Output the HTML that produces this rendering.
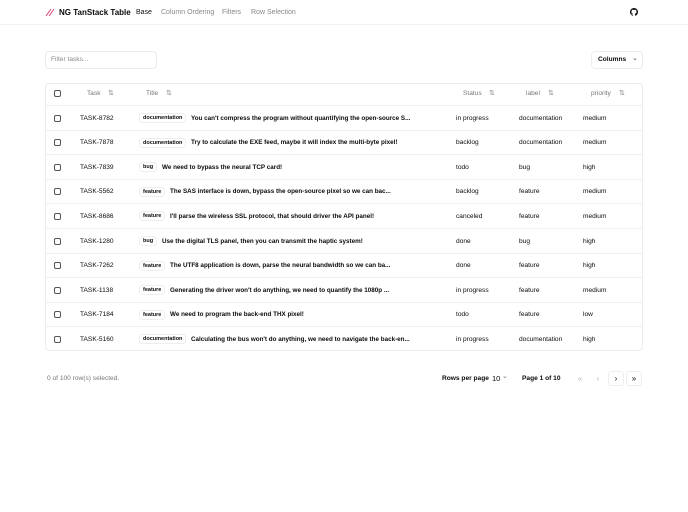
<!DOCTYPE html>
<html><head><meta charset="utf-8"><style>
*{box-sizing:border-box;margin:0;padding:0}
body{width:688px;height:512px;background:#fff;font-family:"Liberation Sans",sans-serif;color:#0a0a0a;position:relative;overflow:hidden;font-size:6.6px}
.a{position:absolute;white-space:nowrap}
.hdr{position:absolute;left:0;top:0;width:688px;height:25px;border-bottom:1px solid #f0f0f0}
.nav{color:#888;font-size:7px}
.box{position:absolute;border:1px solid #ececec;border-radius:4px;background:#fff}
.cb{position:absolute;width:7px;height:7px;border:1px solid #555;border-radius:2px;left:54px}
.row{position:absolute;left:46px;width:596px;height:24.6px;border-top:1px solid #f0f0f0}
.row span{position:absolute;top:8.5px;white-space:nowrap}
.badge{border:1px solid #eee;border-radius:3px;padding:1px 3px;font-size:5.5px;font-weight:bold;top:7px!important}
.ttl{font-weight:bold;font-size:6.3px}
.th{color:#777;top:90px}
.si{color:#888;font-size:7px}
.pb{position:absolute;top:371px;width:16px;height:15px;border:1px solid #eee;border-radius:3px;text-align:center;line-height:13px;font-size:8px}
</style></head><body>
<div class="hdr"></div>
<svg class="a" style="left:45px;top:8px" width="10" height="9" viewBox="0 0 10 9"><path d="M1 8L6 1M4 8L9 1" stroke="#d6457a" stroke-width="1"/></svg>
<div class="a" style="left:59px;top:8px;font-weight:bold;font-size:8px">NG TanStack Table</div>
<div class="a nav" style="left:136px;top:9px;color:#111">Base</div>
<div class="a nav" style="left:161px;top:9px">Column Ordering</div>
<div class="a nav" style="left:222px;top:9px">Filters</div>
<div class="a nav" style="left:251px;top:9px">Row Selection</div>
<svg class="a" style="left:630px;top:8px" width="8" height="8" viewBox="0 0 16 16"><path fill="#111" d="M8 0C3.6 0 0 3.6 0 8c0 3.5 2.3 6.5 5.5 7.600.4.1.5-.2.5-.4v-1.4c-2.2.5-2.7-1-2.7-1-.4-.9-.9-1.2-.9-1.2-.7-.5.1-.5.1-.5.8.1 1.2.8 1.2.8.7 1.3 1.9.9 2.3.7.1-.5.3-.9.5-1.1-1.8-.2-3.6-.9-3.6-4 0-.9.3-1.6.8-2.1-.1-.2-.4-1 .1-2.1 0 0 .7-.2 2.2.8.6-.2 1.3-.3 2-.3s1.4.1 2 .3c1.5-1 2.2-.8 2.2-.8.4 1.1.2 1.9.1 2.1.5.6.8 1.3.8 2.1 0 3.100-1.9 3.7-3.6 3.9.3.3.5.8.5 1.5v2.2c0 .2.1.5.6.4C13.7 14.5 16 11.5 16 8c0-4.4-3.6-8-8-8z"/></svg>
<div class="box" style="left:45px;top:51px;width:112px;height:18px"></div>
<div class="a" style="left:51px;top:56px;color:#888">Filter tasks...</div>
<div class="box" style="left:591px;top:51px;width:52px;height:18px"></div>
<div class="a" style="left:598px;top:56px;font-weight:bold">Columns</div>
<div class="a" style="left:632px;top:54px;font-size:7px;color:#555">⌄</div>
<div class="box" style="left:45px;top:83px;width:598px;height:268px"></div>
<div class="cb" style="top:90px"></div>
<div class="a th" style="left:87px">Task</div><div class="a si" style="left:108px;top:89px">⇅</div>
<div class="a th" style="left:146px">Title</div><div class="a si" style="left:166px;top:89px">⇅</div>
<div class="a th" style="left:463px">Status</div><div class="a si" style="left:489px;top:89px">⇅</div>
<div class="a th" style="left:526px">label</div><div class="a si" style="left:548px;top:89px">⇅</div>
<div class="a th" style="left:591px">priority</div><div class="a si" style="left:619px;top:89px">⇅</div>
<div class="a" style="left:47px;top:375px;color:#777">0 of 100 row(s) selected.</div>
<div class="a" style="left:442px;top:375px;font-weight:bold">Rows per page</div>
<div class="a" style="left:492px;top:374px;font-size:7.5px">10</div>
<div class="a" style="left:502px;top:372px;font-size:7px;color:#777">⌄</div>
<div class="a" style="left:522px;top:375px;font-weight:bold">Page 1 of 10</div>
<div class="pb" style="left:572px;border-color:#fff;color:#bbb">«</div>
<div class="pb" style="left:590px;border-color:#fff;color:#bbb">‹</div>
<div class="pb" style="left:608px">›</div>
<div class="pb" style="left:626px">»</div>
<div class="row" style="top:105px"><div class="cb" style="left:8px;top:8.5px"></div><span style="left:34px">TASK-8782</span><span class="badge" style="left:93px">documentation</span><span class="ttl" style="left:145px">You can't compress the program without quantifying the open-source S...</span><span style="left:410px">in progress</span><span style="left:473px">documentation</span><span style="left:537px">medium</span></div>
<div class="row" style="top:129.6px"><div class="cb" style="left:8px;top:8.5px"></div><span style="left:34px">TASK-7878</span><span class="badge" style="left:93px">documentation</span><span class="ttl" style="left:145px">Try to calculate the EXE feed, maybe it will index the multi-byte pixel!</span><span style="left:410px">backlog</span><span style="left:473px">documentation</span><span style="left:537px">medium</span></div>
<div class="row" style="top:154.2px"><div class="cb" style="left:8px;top:8.5px"></div><span style="left:34px">TASK-7839</span><span class="badge" style="left:93px">bug</span><span class="ttl" style="left:116px">We need to bypass the neural TCP card!</span><span style="left:410px">todo</span><span style="left:473px">bug</span><span style="left:537px">high</span></div>
<div class="row" style="top:178.8px"><div class="cb" style="left:8px;top:8.5px"></div><span style="left:34px">TASK-5562</span><span class="badge" style="left:93px">feature</span><span class="ttl" style="left:124px">The SAS interface is down, bypass the open-source pixel so we can bac...</span><span style="left:410px">backlog</span><span style="left:473px">feature</span><span style="left:537px">medium</span></div>
<div class="row" style="top:203.4px"><div class="cb" style="left:8px;top:8.5px"></div><span style="left:34px">TASK-8686</span><span class="badge" style="left:93px">feature</span><span class="ttl" style="left:124px">I'll parse the wireless SSL protocol, that should driver the API panel!</span><span style="left:410px">canceled</span><span style="left:473px">feature</span><span style="left:537px">medium</span></div>
<div class="row" style="top:228px"><div class="cb" style="left:8px;top:8.5px"></div><span style="left:34px">TASK-1280</span><span class="badge" style="left:93px">bug</span><span class="ttl" style="left:116px">Use the digital TLS panel, then you can transmit the haptic system!</span><span style="left:410px">done</span><span style="left:473px">bug</span><span style="left:537px">high</span></div>
<div class="row" style="top:252.6px"><div class="cb" style="left:8px;top:8.5px"></div><span style="left:34px">TASK-7262</span><span class="badge" style="left:93px">feature</span><span class="ttl" style="left:124px">The UTF8 application is down, parse the neural bandwidth so we can ba...</span><span style="left:410px">done</span><span style="left:473px">feature</span><span style="left:537px">high</span></div>
<div class="row" style="top:277.2px"><div class="cb" style="left:8px;top:8.5px"></div><span style="left:34px">TASK-1138</span><span class="badge" style="left:93px">feature</span><span class="ttl" style="left:124px">Generating the driver won't do anything, we need to quantify the 1080p ...</span><span style="left:410px">in progress</span><span style="left:473px">feature</span><span style="left:537px">medium</span></div>
<div class="row" style="top:301.8px"><div class="cb" style="left:8px;top:8.5px"></div><span style="left:34px">TASK-7184</span><span class="badge" style="left:93px">feature</span><span class="ttl" style="left:124px">We need to program the back-end THX pixel!</span><span style="left:410px">todo</span><span style="left:473px">feature</span><span style="left:537px">low</span></div>
<div class="row" style="top:326.4px"><div class="cb" style="left:8px;top:8.5px"></div><span style="left:34px">TASK-5160</span><span class="badge" style="left:93px">documentation</span><span class="ttl" style="left:145px">Calculating the bus won't do anything, we need to navigate the back-en...</span><span style="left:410px">in progress</span><span style="left:473px">documentation</span><span style="left:537px">high</span></div>
</body></html>
